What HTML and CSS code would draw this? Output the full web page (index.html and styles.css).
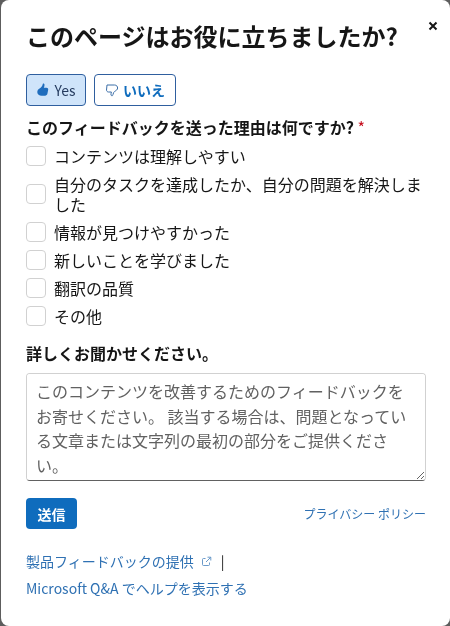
FILE: index.html
```html
<!DOCTYPE html>
<html lang="ja">
<head>
<meta charset="utf-8">
<title>Feedback</title>
<link rel="stylesheet" href="styles.css">
</head>
<body>
<div class="dialog">
  <button class="close" aria-label="close"><svg width="10" height="10" viewBox="0 0 10 10"><path d="M1.500 1.500l7 7M8.500 1.500l-7 7" stroke="#161616" stroke-width="2" fill="none"/></svg></button>
  <h1 class="title">このページはお役に立ちましたか?</h1>
  <div class="votes">
    <button class="vote vote-yes"><svg width="14" height="14" viewBox="0 0 14 14"><path d="M7.200.6c.8-.2 1.300.5 1.300 1.300 0 1-.3 2-.7 2.900h2.700c1.100 0 1.900.9 1.700 2l-.8 4c-.2 1.100-1.200 1.900-2.300 1.900H5.600C3.200 12.700 1.400 11.400 1.300 9.200 1.200 7.300 2.400 6.100 3.900 5.200 5.300 4.300 6.400 2.900 6.700 1.300c.1-.3.2-.6.500-.7z" fill="#1f6dbd"/></svg><span>Yes</span></button>
    <button class="vote vote-no"><svg width="14" height="14" viewBox="0 0 14 14"><path d="M2 2H9.500C11.500 2 12.600 3.400 12.600 5 12.600 6.800 11 7.500 9.800 8.300 8.800 9 8.300 10 8 11.500 7.800 12.600 7.200 13 6.700 12.800 6 12.500 5.800 11.800 6 10.800L6.400 9H3.500C2.300 9 1.500 8 1.500 7z" fill="none" stroke="#3b6ea8" stroke-width="1" stroke-linejoin="round"/></svg><span>いいえ</span></button>
  </div>
  <div class="question">このフィードバックを送った理由は何ですか? <span class="req">*</span></div>
  <ul class="options">
    <li class="option"><span class="box"></span><span>コンテンツは理解しやすい</span></li>
    <li class="option"><span class="box"></span><span>自分のタスクを達成したか、自分の問題を解決しました</span></li>
    <li class="option"><span class="box"></span><span>情報が見つけやすかった</span></li>
    <li class="option"><span class="box"></span><span>新しいことを学びました</span></li>
    <li class="option"><span class="box"></span><span>翻訳の品質</span></li>
    <li class="option"><span class="box"></span><span>その他</span></li>
  </ul>
  <div class="more">詳しくお聞かせください。</div>
  <textarea class="comment" placeholder="このコンテンツを改善するためのフィードバックをお寄せください。 該当する場合は、問題となっている文章または文字列の最初の部分をご提供ください。"></textarea>
  <div class="actions">
    <button class="submit">送信</button>
    <a class="privacy">プライバシー ポリシー</a>
  </div>
  <div class="links">
    <div class="link-row"><a class="link">製品フィードバックの提供</a><svg class="ext" width="11" height="11" viewBox="0 0 11 11"><path d="M8.500 6.500v2a1 1 0 0 1-1 1h-5a1 1 0 0 1-1-1v-5a1 1 0 0 1 1-1h2M6.500 1.200h3.300v3.300M9.600 1.400 5 6" fill="none" stroke="#5a8fc4" stroke-width=".9"/></svg><span class="sep">|</span></div>
    <div class="link-row"><a class="link">Microsoft Q&amp;A でヘルプを表示する</a></div>
  </div>
</div>
</body>
</html>
```
FILE: styles.css
```css
* { box-sizing: border-box; }
html, body { margin: 0; height: 100%; }
body {
  background: #5d5d5d;
  font-family: "Noto Sans CJK JP", "Noto Sans", sans-serif;
  color: #161616;
  overflow: hidden;
}
.dialog {
  position: relative;
  width: 449px;
  height: 626px;
  margin-left: 1px;
  background: #fff;
  border-radius: 8px;
  padding: 18px 24px 0 25px;
}
.close {
  position: absolute;
  top: 21px;
  right: 12px;
  width: 10px;
  height: 10px;
  padding: 0;
  border: 0;
  background: none;
  display: flex;
}
.title {
  margin: 0;
  font-size: 24px;
  line-height: 36px;
  font-weight: 700;
  white-space: nowrap;
}
.votes {
  display: flex;
  gap: 8px;
  margin-top: 20px;
}
.vote {
  display: flex;
  align-items: center;
  justify-content: center;
  gap: 4px;
  height: 32px;
  padding: 0;
  border: 1px solid #2f5f9f;
  border-radius: 4px;
  background: #fff;
  font: inherit;
  font-size: 14px;
}
.vote-yes { width: 60px; background: #cfe4fa; color: #243a5e; }
.vote-no { width: 82px; color: #0f6cbd; font-weight: 700; }
.question {
  margin-top: 7px;
  font-size: 16px;
  line-height: 28px;
  font-weight: 700;
}
.req { color: #c50f1f; font-weight: 400; }
.options {
  list-style: none;
  margin: 1px 0 0;
  padding: 0;
}
.option {
  display: flex;
  align-items: center;
  gap: 8px;
  font-size: 16px;
  line-height: 20px;
  padding: 4px 0;
}
.box {
  flex: none;
  width: 20px;
  height: 20px;
  border: 1px solid #d1d1d1;
  border-radius: 4px;
  background: #fff;
}
.more {
  margin-top: 11px;
  font-size: 16px;
  line-height: 24px;
  font-weight: 700;
}
.comment {
  display: block;
  width: 100%;
  height: 108px;
  margin-top: 8px;
  padding: 5px 9px 4px 9px;
  border: 1px solid #d1d1d1;
  border-bottom-color: #616161;
  border-radius: 4px;
  font: inherit;
  font-size: 16px;
  line-height: 24.7px;
  resize: vertical;
}
.comment::placeholder { color: #616161; opacity: 1; padding-right: 4px; }
.actions {
  display: flex;
  justify-content: space-between;
  align-items: center;
  margin-top: 17px;
}
.submit {
  width: 51px;
  height: 31px;
  padding: 0;
  border: 0;
  border-radius: 4px;
  background: #0f6cbd;
  color: #fff;
  font: inherit;
  font-size: 14px;
  font-weight: 700;
}
.privacy { font-size: 12px; color: #2f71b3; }
.links { margin-top: 19px; }
.link-row {
  display: flex;
  align-items: center;
  font-size: 14px;
  line-height: 27px;
}
.link { color: #2f71b3; }
.ext { margin-left: 7px; }
.sep { margin-left: 9px; color: #161616; }
```
